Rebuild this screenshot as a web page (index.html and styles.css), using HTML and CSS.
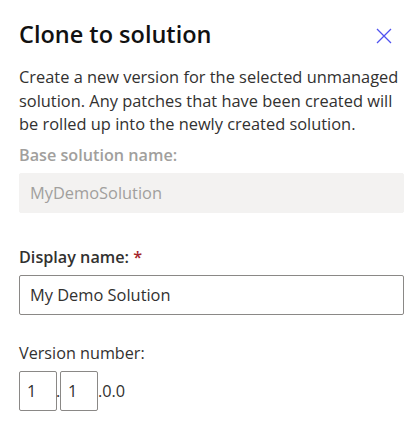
FILE: index.html
```html
<!DOCTYPE html>
<html lang="en">
<head>
<meta charset="utf-8">
<title>Clone to solution</title>
<link rel="stylesheet" href="styles.css">
</head>
<body>
<div class="panel">
  <div class="header">
    <h1 class="title">Clone to solution</h1>
    <button class="close" aria-label="Close">
      <svg width="16" height="16" viewBox="0 0 16 16"><path d="M1 1L15 15M15 1L1 15" stroke="#4f52f0" stroke-width="1.3" fill="none"/></svg>
    </button>
  </div>
  <p class="desc">Create a new version for the selected unmanaged solution. Any patches that have been created will be rolled up into the newly created solution.</p>
  <div class="field first">
    <label class="label disabled">Base solution name:</label>
    <div class="input readonly">MyDemoSolution</div>
  </div>
  <div class="field second">
    <label class="label">Display name: <span class="req">*</span></label>
    <div class="input">My Demo Solution</div>
  </div>
  <div class="field third">
    <label class="label plain">Version number:</label>
    <div class="version">
      <div class="vbox">1</div><span class="dot">.</span><div class="vbox">1</div><span class="rest">.0.0</span>
    </div>
  </div>
</div>
</body>
</html>
```
FILE: styles.css
```css
html, body {
  margin: 0;
  padding: 0;
  background: #ffffff;
}
body {
  font-family: "Open Sans", "Noto Sans", sans-serif;
  color: #323130;
}
.panel {
  display: flex;
  flex-direction: column;
  padding: 18px 9px 0 19px;
}
.header {
  display: flex;
  align-items: center;
  justify-content: space-between;
  height: 32px;
}
.title {
  margin: 0;
  font-size: 23.5px;
  font-weight: 600;
  line-height: 32px;
  color: #111111;
}
.close {
  width: 32px;
  height: 32px;
  border: 0;
  background: transparent;
  padding: 0;
  margin-right: 4px;
  margin-top: 3px;
  display: flex;
  align-items: center;
  justify-content: center;
}
.desc {
  margin: 15px 0 0 0;
  font-size: 16.4px;
  line-height: 23.5px;
  color: #323130;
}
.field {
  display: flex;
  flex-direction: column;
}
.field.first {
  margin-top: 9px;
}
.field.second {
  margin-top: 34px;
}
.field.third {
  margin-top: 28px;
}
.label {
  font-size: 16.2px;
  font-weight: 600;
  line-height: 20px;
  margin-bottom: 8px;
  color: #323130;
}
.label.disabled {
  color: #a19f9d;
}
.label.plain {
  font-weight: 400;
}
.req {
  color: #a4262c;
}
.input {
  box-sizing: border-box;
  height: 40px;
  border: 1px solid #8a8886;
  border-radius: 2px;
  padding: 0 10px;
  display: flex;
  align-items: center;
  font-size: 16.4px;
  color: #323130;
}
.input.readonly {
  border-color: #f3f2f1;
  background: #f3f2f1;
  color: #a19f9d;
}
.version {
  display: flex;
  align-items: baseline;
  font-size: 16.3px;
}
.vbox {
  box-sizing: border-box;
  width: 38px;
  height: 40px;
  border: 1px solid #8a8886;
  border-radius: 2px;
  padding: 0 7px;
  display: flex;
  align-items: center;
}
.dot {
  width: 3px;
  overflow: visible;
  text-indent: -1px;
}
.rest {
  margin-left: 0;
}
```
